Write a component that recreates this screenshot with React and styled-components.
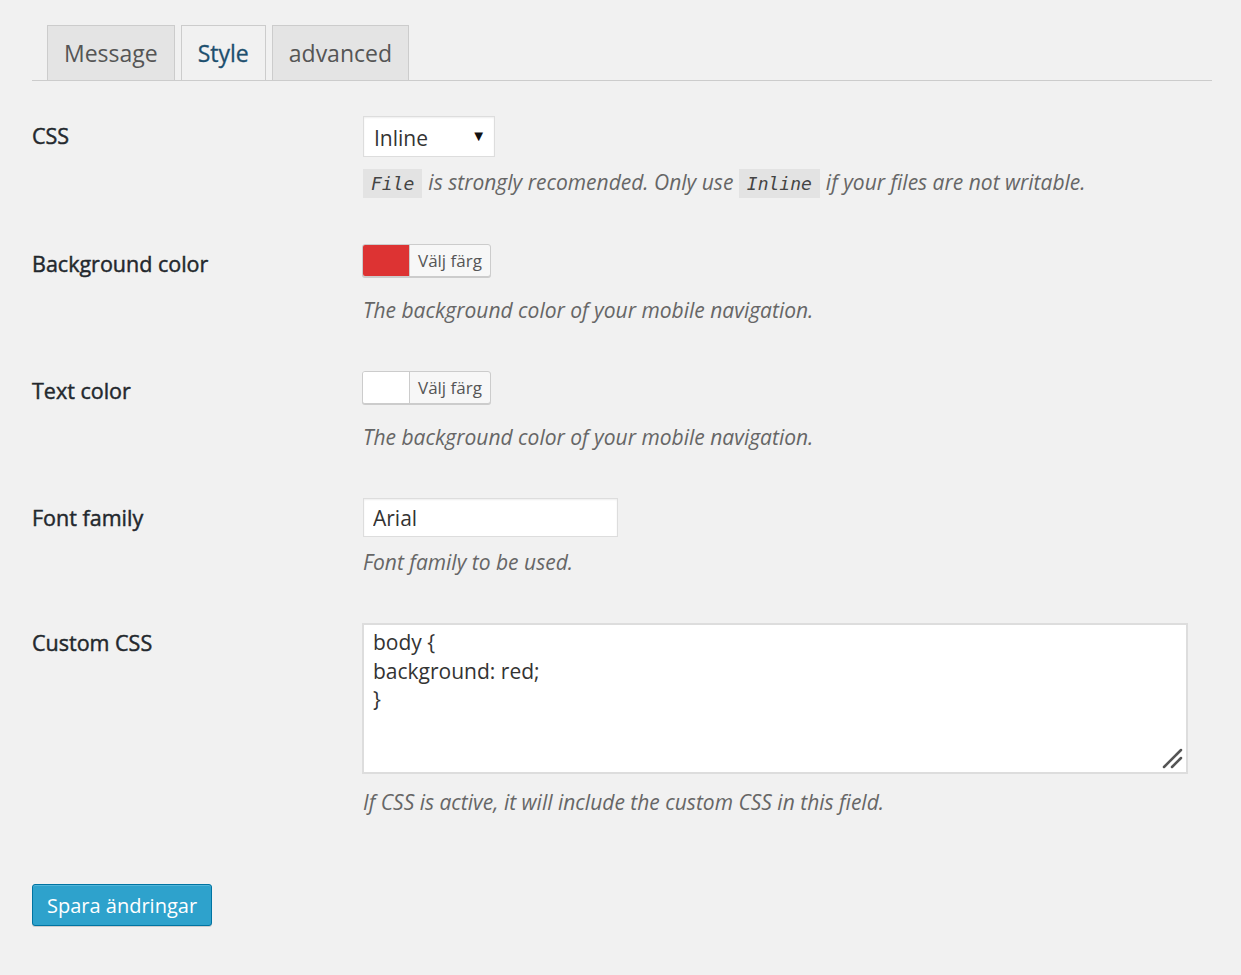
import styled, { createGlobalStyle } from 'styled-components'

const GlobalStyle = createGlobalStyle`
  html, body {
    margin: 0;
    padding: 0;
    background: #f1f1f1;
    font-family: "Open Sans", "Noto Sans", sans-serif;
    color: #444;
  }
`

const Page = styled.div`
  padding: 25px 29px 40px 32px;
  width: 1180px;
`

const TabBar = styled.nav`
  display: flex;
  gap: 6px;
  padding-left: 15px;
  border-bottom: 1px solid #ccc;
  margin-bottom: 14px;
`

const Tab = styled.a`
  display: block;
  height: 54px;
  line-height: 54px;
  padding: 0 16px;
  font-size: 23px;
  font-weight: 400;
  border: 1px solid #ccc;
  border-bottom: none;
  margin-bottom: ${p => (p.$active ? '-1px' : '0')};
  background: ${p => (p.$active ? '#f1f1f1' : '#e4e4e4')};
  color: ${p => (p.$active ? '#1d4f6e' : '#555')};
  -webkit-text-stroke: ${p => (p.$active ? '0.3px #1d4f6e' : '0')};
  box-sizing: content-box;
  cursor: pointer;
`

const Row = styled.div`
  display: grid;
  grid-template-columns: 331px 1fr;
  padding: 21px 0 25px;
`

const Label = styled.label`
  padding-top: 6px;
  font-size: 21.5px;
  line-height: 28px;
  font-weight: 400;
  color: #23282d;
  -webkit-text-stroke: 0.45px #23282d;
`

const Field = styled.div`
  display: flex;
  flex-direction: column;
  align-items: flex-start;
`

const Description = styled.p`
  margin: ${p => p.$gap || 11}px 0 0;
  font-size: 21px;
  line-height: 29px;
  font-style: italic;
  color: #666;
`

const Code = styled.code`
  display: inline-block;
  font-family: "DejaVu Sans Mono", "Liberation Mono", monospace;
  font-size: 18px;
  font-style: italic;
  line-height: 29px;
  padding: 0 8px;
  margin-right: 6px;
  background: #e3e3e3;
  color: #444;
`

const SelectBox = styled.div`
  position: relative;
  height: 39px;
  width: 120px;
  border: 1px solid #ddd;
  background: #fff;
  box-shadow: inset 0 1px 2px rgba(0, 0, 0, 0.07);
  font-size: 21px;
  line-height: 42px;
  color: #333;
  padding-left: 10px;
  box-sizing: content-box;
`

const Arrow = styled.span`
  position: absolute;
  right: 8px;
  top: -3px;
  font-size: 15px;
  color: #111;
`

const ColorButton = styled.button`
  display: flex;
  align-items: stretch;
  height: 33px;
  padding: 0;
  margin: 0 0 8px -1px;
  border: 1px solid #ccc;
  border-radius: 3px;
  background: #f7f7f7;
  box-shadow: 0 1px 0 #ccc;
  cursor: pointer;
  overflow: hidden;
  font-family: inherit;
`

const Swatch = styled.span`
  width: 46px;
  background: ${p => p.$color};
`

const ColorLabel = styled.span`
  border-left: 1px solid #ccc;
  padding: 0 8px;
  font-size: 17px;
  line-height: 31px;
  color: #555;
`

const TextInput = styled.input`
  width: 255px;
  height: 39px;
  box-sizing: border-box;
  border: 1px solid #ddd;
  box-shadow: inset 0 1px 2px rgba(0, 0, 0, 0.07);
  background: #fff;
  padding: 0 9px;
  font-family: inherit;
  font-size: 21px;
  color: #333;
  outline: none;
`

const AreaWrap = styled.div`
  position: relative;
  width: 826px;
  height: 151px;
  margin-left: -1px;
`

const TextArea = styled.textarea`
  width: 100%;
  height: 100%;
  box-sizing: border-box;
  border: 2px solid #ddd;
  background: #fff;
  padding: 3px 9px;
  font-family: inherit;
  font-size: 21px;
  line-height: 28.5px;
  color: #333;
  resize: none;
  outline: none;
  display: block;
`

const Grip = styled.svg`
  position: absolute;
  right: 4px;
  bottom: 4px;
`

const Submit = styled.button`
  margin-top: 42px;
  height: 42px;
  padding: 0 14px;
  border: 1px solid #0074a2;
  border-radius: 3px;
  background: #2ea2cc;
  box-shadow: inset 0 1px 0 rgba(120, 200, 230, 0.5), 0 1px 0 rgba(0, 0, 0, 0.15);
  color: #fff;
  font-family: inherit;
  font-size: 20px;
  cursor: pointer;
`

const App = () => (
  <Page>
    <GlobalStyle />
    <TabBar>
      <Tab>Message</Tab>
      <Tab $active>Style</Tab>
      <Tab>advanced</Tab>
    </TabBar>

    <Row>
      <Label>CSS</Label>
      <Field>
        <SelectBox>
          Inline
          <Arrow>▼</Arrow>
        </SelectBox>
        <Description>
          <Code>File</Code>is strongly recomended. Only use <Code>Inline</Code>if your files are not writable.
        </Description>
      </Field>
    </Row>

    <Row>
      <Label>Background color</Label>
      <Field>
        <ColorButton>
          <Swatch $color="#dd3333" />
          <ColorLabel>Välj färg</ColorLabel>
        </ColorButton>
        <Description>The background color of your mobile navigation.</Description>
      </Field>
    </Row>

    <Row>
      <Label>Text color</Label>
      <Field>
        <ColorButton>
          <Swatch $color="#ffffff" />
          <ColorLabel>Välj färg</ColorLabel>
        </ColorButton>
        <Description>The background color of your mobile navigation.</Description>
      </Field>
    </Row>

    <Row>
      <Label>Font family</Label>
      <Field>
        <TextInput defaultValue="Arial" />
        <Description>Font family to be used.</Description>
      </Field>
    </Row>

    <Row>
      <Label>Custom CSS</Label>
      <Field>
        <AreaWrap>
          <TextArea defaultValue={'body {\nbackground: red;\n}'} />
          <Grip width="22" height="22" viewBox="0 0 22 22">
            <line x1="2" y1="19" x2="19" y2="2" stroke="#555" strokeWidth="2.5" strokeLinecap="round" />
            <line x1="10" y1="19" x2="19" y2="10" stroke="#555" strokeWidth="2.5" strokeLinecap="round" />
          </Grip>
        </AreaWrap>
        <Description $gap={14}>If CSS is active, it will include the custom CSS in this field.</Description>
      </Field>
    </Row>

    <Submit>Spara ändringar</Submit>
  </Page>
)

export default App
